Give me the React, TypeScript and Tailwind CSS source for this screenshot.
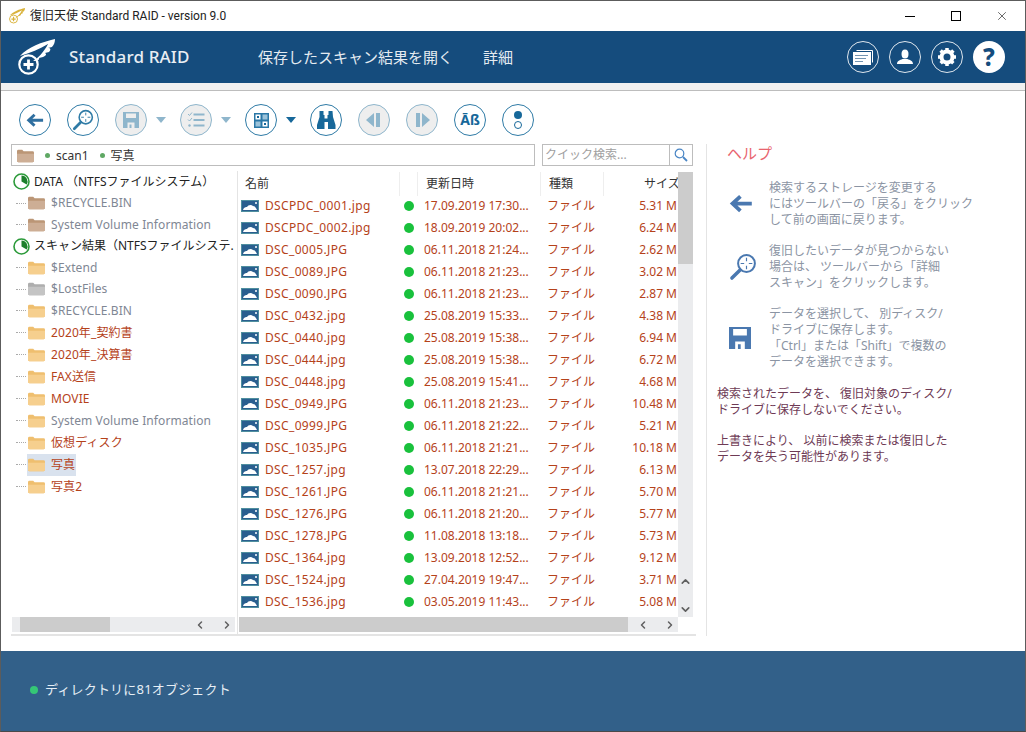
import { ChevronLeft, ChevronRight, ChevronUp, ChevronDown, X } from "lucide-react";

const font = "font-['Noto_Sans','Noto_Sans_CJK_JP',sans-serif]";

type FolderKind = "tan" | "orange" | "gray";

const treeRows: { label: string; kind: string; red?: boolean; selected?: boolean }[] = [
  { label: "DATA  （NTFSファイルシステム）", kind: "root" },
  { label: "$RECYCLE.BIN", kind: "tan" },
  { label: "System Volume Information", kind: "tan" },
  { label: "スキャン結果（NTFSファイルシステ.", kind: "root" },
  { label: "$Extend", kind: "orange" },
  { label: "$LostFiles", kind: "gray" },
  { label: "$RECYCLE.BIN", kind: "orange" },
  { label: "2020年_契約書", kind: "orange", red: true },
  { label: "2020年_決算書", kind: "orange", red: true },
  { label: "FAX送信", kind: "orange", red: true },
  { label: "MOVIE", kind: "orange", red: true },
  { label: "System Volume Information", kind: "orange" },
  { label: "仮想ディスク", kind: "orange", red: true },
  { label: "写真", kind: "orange", red: true, selected: true },
  { label: "写真2", kind: "orange", red: true },
];

const files = [
  ["DSCPDC_0001.jpg", "17.09.2019 17:30...", "5.31 M"],
  ["DSCPDC_0002.jpg", "18.09.2019 20:02...", "6.24 M"],
  ["DSC_0005.JPG", "06.11.2018 21:24...", "2.62 M"],
  ["DSC_0089.JPG", "06.11.2018 21:23...", "3.02 M"],
  ["DSC_0090.JPG", "06.11.2018 21:23...", "2.87 M"],
  ["DSC_0432.jpg", "25.08.2019 15:33...", "4.38 M"],
  ["DSC_0440.jpg", "25.08.2019 15:38...", "6.94 M"],
  ["DSC_0444.jpg", "25.08.2019 15:38...", "6.72 M"],
  ["DSC_0448.jpg", "25.08.2019 15:41...", "4.68 M"],
  ["DSC_0949.JPG", "06.11.2018 21:23...", "10.48 M"],
  ["DSC_0999.JPG", "06.11.2018 21:22...", "5.21 M"],
  ["DSC_1035.JPG", "06.11.2018 21:21...", "10.18 M"],
  ["DSC_1257.jpg", "13.07.2018 22:29...", "6.13 M"],
  ["DSC_1261.JPG", "06.11.2018 21:21...", "5.70 M"],
  ["DSC_1276.JPG", "06.11.2018 21:20...", "5.77 M"],
  ["DSC_1278.JPG", "11.08.2018 13:18...", "5.73 M"],
  ["DSC_1364.jpg", "13.09.2018 12:52...", "9.12 M"],
  ["DSC_1524.jpg", "27.04.2019 19:47...", "3.71 M"],
  ["DSC_1536.jpg", "03.05.2019 11:43...", "5.08 M"],
];

const Wing = ({ color, size }: { color: string; size: number }) => (
  <svg width={size} height={size} viewBox="0 0 37 37" fill="none">
    <circle cx="10.500" cy="25.500" r="9.200" stroke={color} strokeWidth="2.200" />
    <path d="M10.500 20.500v10M5.500 25.500h10" stroke={color} strokeWidth="2.800" />
    <path
      d="M2 17C10 8 24 3 37 0c0 3-1 6-3 8l-4 1c3 0 3 2 1 4l-4 1c2 1 1 3-2 4l-4 1c1 1-1 3-6 3 5-3 11-9 15-17C22 10 12 14 2 17z"
      fill={color}
    />
  </svg>
);

const Circle = ({ dim, children }: { dim?: boolean; children: React.ReactNode }) => (
  <div
    className={`w-8 h-8 rounded-full border flex items-center justify-center shrink-0 ${
      dim ? "border-[#8fb6cc] bg-[#eeeeee]" : "border-[#2f7ba6] bg-white"
    }`}
  >
    {children}
  </div>
);

const Caret = ({ dim }: { dim?: boolean }) => (
  <div
    className={`w-0 h-0 border-l-[5px] border-r-[5px] border-t-[6px] border-l-transparent border-r-transparent ${
      dim ? "border-t-[#8fb6cc]" : "border-t-[#17689a]"
    }`}
  />
);

const BackIcon = ({ color, w = 18 }: { color: string; w?: number }) => (
  <svg width={w} height={w * 0.8} viewBox="0 0 20 16" fill="none">
    <path d="M19 8H4M9.500 2 3 8l6.500 6" stroke={color} strokeWidth="3.200" />
  </svg>
);

const ScanIcon = ({ color, size = 22 }: { color: string; size?: number }) => (
  <svg width={size} height={size} viewBox="0 0 24 24" fill="none">
    <circle cx="15" cy="9" r="7.200" stroke={color} strokeWidth="1.700" />
    <path d="M15 4v3M15 11v3M10 9h3M17 9h3" stroke={color} strokeWidth="1" />
    <path d="M9.500 14.500 2.500 21.500" stroke={color} strokeWidth="3" strokeLinecap="round" />
  </svg>
);

const SaveIcon = ({ color, size = 16 }: { color: string; size?: number }) => (
  <svg width={size} height={size} viewBox="0 0 16 16">
    <path
      fillRule="evenodd"
      d="M0 0h16v16H0zM3 1.500v4.600h10V1.500zM4.500 10.500V16h7v-5.500zM6.500 12.500h2V16h-2z"
      fill={color}
    />
  </svg>
);

const ListIcon = () => (
  <svg width="18" height="18" viewBox="0 0 18 18" fill="none">
    <path d="M6.500 3.500h11M6.500 9h11M6.500 14.500h11" stroke="#8fb6cc" strokeWidth="1.800" />
    <path d="M1 3l1.500 1.500L5 1.500M1 8.500 2.500 10 5 7" stroke="#8fb6cc" strokeWidth="1" />
    <circle cx="2.500" cy="14.500" r="1.200" fill="#8fb6cc" />
  </svg>
);

const GridIcon = () => (
  <svg width="15" height="15" viewBox="0 0 15 15">
    <path fill="#2a77a6" d="M0 0h15v15H0z" />
    <path fill="#fff" d="M1.500 1.500h5v5h-5zM8.500 8.500h5v5h-5z" />
    <path fill="#17689a" d="M3 3h2v2H3zM10 10h2v2h-2z" />
    <path fill="#9cc3da" d="M8.500 1.500h5v5h-5zM1.500 8.500h5v5h-5z" />
  </svg>
);

const Binoculars = () => (
  <svg width="20" height="20" viewBox="0 0 20 20">
    <path
      fill="#17689a"
      d="M3.500 1h4v4h1v3.500h3V5h1V1h4l.5 6 2.500 8v4h-7.500v-7H8.500v7H1v-4l2.500-8z"
    />
  </svg>
);

const Tri = ({ flip }: { flip?: boolean }) => (
  <svg width="16" height="14" viewBox="0 0 16 14" className={flip ? "-scale-x-100" : ""}>
    <path fill="#8fb6cc" d="M0 7 8 0v14zM10 0h4v14h-4z" />
  </svg>
);

const CardsIcon = () => (
  <svg width="20" height="16" viewBox="0 0 20 16">
    <path fill="none" stroke="#fff" d="M3.500 1.500h16v12" />
    <path fill="#fff" d="M0 3h18v13H0z" />
    <path fill="#154c7d" d="M2 6h13v1H2zM2 9h11v1H2zM2 12h8v1H2z" opacity=".6" />
  </svg>
);

const Person = () => (
  <svg width="16" height="16" viewBox="0 0 16 16" fill="#fff">
    <ellipse cx="8" cy="5" rx="3.500" ry="4.500" />
    <path d="M0 15c0-3 3-4 5.500-5h5C13 11 16 12 16 15z" />
  </svg>
);

const Gear = () => (
  <svg width="20" height="20" viewBox="0 0 20 20">
    <circle cx="10" cy="10" r="5.500" fill="none" stroke="#fff" strokeWidth="4" />
    <path
      d="M10 1v18M1 10h18M3.600 3.600l12.800 12.800M16.400 3.600 3.600 16.400"
      stroke="#fff"
      strokeWidth="3.500"
      strokeDasharray="3.500 11"
      fill="none"
    />
  </svg>
);

const Folder = ({ kind }: { kind: FolderKind }) => {
  const c = {
    tan: ["#cdae95", "#bb9676"],
    orange: ["#f6cf8e", "#efbf6f"],
    gray: ["#c4c4c4", "#aeaeae"],
  }[kind];
  return (
    <svg width="17" height="14" viewBox="0 0 18 14" className="shrink-0">
      <path d="M0 2q0-1.500 1.500-1.500h4L7 2h9.500Q18 2 18 3.500V12q0 1.500-1.500 1.500h-15Q0 13.500 0 12z" fill={c[1]} />
      <path d="M0 4.500h18V12q0 1.500-1.500 1.500h-15Q0 13.500 0 12z" fill={c[0]} />
    </svg>
  );
};

const Pie = () => (
  <svg width="17" height="17" viewBox="0 0 17 17" className="shrink-0">
    <circle cx="8.500" cy="8.500" r="7.500" fill="#fff" stroke="#2c9a3a" strokeWidth="1.600" />
    <path d="M8.500 8.500V2.500A6 6 0 0 1 13.700 11.500z" fill="#1d7f2c" />
  </svg>
);

const Photo = () => (
  <svg width="18" height="12" viewBox="0 0 18 12" className="shrink-0">
    <path fill="#4f8f9f" d="M0 0h18v12H0z" />
    <path fill="#2a5f8f" d="M1 1h16v10H1z" />
    <path fill="#fff" d="M2 10c1-3 3-3 4-3 1-2 4-3 6-1 2 0 3 2 4 4z" />
    <circle cx="15" cy="3" r="1" fill="#fff" />
  </svg>
);

const ScrollArrow = ({ children }: { children: React.ReactNode }) => (
  <div className="w-[15px] h-[15px] flex items-center justify-center text-[#606060]">{children}</div>
);

const HelpItem = ({ icon, lines }: { icon: React.ReactNode; lines: string[] }) => (
  <div className="flex items-center">
    <div className="w-[52px] pl-[12px] shrink-0 flex items-center">{icon}</div>
    <div className="text-[12px] leading-[16px] text-[#8b94a3] whitespace-nowrap">
      {lines.map((l) => (
        <div key={l}>{l}</div>
      ))}
    </div>
  </div>
);

const ColHead = ({ w, label, pad }: { w: string; label: string; pad: string }) => (
  <div className={`${w} ${pad} h-[24px] mt-px border-r border-[#eeeeee] flex items-center shrink-0`}>{label}</div>
);

export default function App() {
  return (
    <div
      className={`${font} w-[1026px] h-[732px] bg-white border border-[#5c5c5c] border-b-[#4a4a4a] flex flex-col overflow-hidden text-[12px]`}
    >
      {/* title bar */}
      <div className="h-[30px] flex items-center shrink-0 pl-[8px]">
        <Wing color="#d9b23a" size={16} />
        <span className="ml-[5px] text-[12px] text-[#222] font-['Roboto','Noto_Sans_CJK_JP',sans-serif]">
          復旧天使 Standard RAID - version 9.0
        </span>
        <div className="ml-auto flex items-center h-full">
          <div className="w-[46px] flex justify-center">
            <div className="w-[10px] h-px bg-black" />
          </div>
          <div className="w-[46px] flex justify-center">
            <div className="w-[10px] h-[10px] border border-black" />
          </div>
          <div className="w-[46px] flex justify-center">
            <X size={14} strokeWidth={1} color="#000" />
          </div>
        </div>
      </div>

      {/* header */}
      <div className="h-[52px] bg-[#154c7d] flex items-center shrink-0 text-white">
        <div className="ml-[17px] w-[37px]">
          <Wing color="#fff" size={37} />
        </div>
        <span className="ml-[14px] text-[17px] font-medium tracking-[0.15px] text-[#e9eef3] w-[189px] whitespace-nowrap">
          Standard RAID
        </span>
        <span className="text-[15px] text-[#e4ebf1] whitespace-nowrap">保存したスキャン結果を開く</span>
        <span className="ml-[30px] text-[15px] text-[#e4ebf1]">詳細</span>
        <div className="ml-auto mr-[20px] flex gap-[10px]">
          <div className="w-8 h-8 rounded-full border border-[#dfe7ee] flex items-center justify-center">
            <CardsIcon />
          </div>
          <div className="w-8 h-8 rounded-full border border-[#dfe7ee] flex items-center justify-center">
            <Person />
          </div>
          <div className="w-8 h-8 rounded-full border border-[#dfe7ee] flex items-center justify-center">
            <Gear />
          </div>
          <div className="w-8 h-8 rounded-full bg-white flex items-center justify-center text-[#154c7d] text-[24px] font-extrabold leading-none">
            ?
          </div>
        </div>
      </div>
      <div className="h-[8px] bg-[#f0f0f0] border-b border-[#bdbdbd] shrink-0" />

      {/* toolbar */}
      <div className="h-[53px] pl-[18px] pt-[13px] flex items-start shrink-0">
        <Circle><BackIcon color="#2f6fa0" /></Circle>
        <div className="ml-[16px]"><Circle><ScanIcon color="#2f7ba6" /></Circle></div>
        <div className="ml-[16px]"><Circle dim><SaveIcon color="#8fb6cc" /></Circle></div>
        <div className="ml-[9px] mt-[13px]"><Caret dim /></div>
        <div className="ml-[14px]"><Circle dim><ListIcon /></Circle></div>
        <div className="ml-[9px] mt-[13px]"><Caret dim /></div>
        <div className="ml-[14px]"><Circle><GridIcon /></Circle></div>
        <div className="ml-[9px] mt-[13px]"><Caret /></div>
        <div className="ml-[14px]"><Circle><Binoculars /></Circle></div>
        <div className="ml-[16px]"><Circle dim><Tri /></Circle></div>
        <div className="ml-[16px]"><Circle dim><Tri flip /></Circle></div>
        <div className="ml-[16px]">
          <Circle><span className="text-[14px] font-bold text-[#17689a] leading-none">Āß</span></Circle>
        </div>
        <div className="ml-[16px]">
          <Circle>
            <div className="flex flex-col items-center gap-[2px]">
              <div className="w-[8px] h-[8px] rounded-full bg-[#17689a]" />
              <div className="w-[8px] h-[8px] rounded-full border border-[#17689a]" />
            </div>
          </Circle>
        </div>
      </div>

      {/* main */}
      <div className="flex flex-1 min-h-0 pl-[10px]">
        <div className="w-[685px] shrink-0 flex flex-col">
          {/* path + search */}
          <div className="flex h-[22px] shrink-0">
            <div className="w-[524px] border border-[#bdbdbd] flex items-center pl-[5px] pt-px text-[#333]">
              <Folder kind="tan" />
              <div className="ml-[11px] w-[5px] h-[5px] rounded-full bg-[#5fa864]" />
              <span className="ml-[6px]">scan1</span>
              <div className="ml-[11px] w-[5px] h-[5px] rounded-full bg-[#5fa864]" />
              <span className="ml-[6px]">写真</span>
            </div>
            <div className="ml-[7px] w-[128px] border border-[#bdbdbd] flex items-center pl-[2px] text-[#a0a0a0]">
              クイック検索...
            </div>
            <div className="w-[23px] border border-l-0 border-[#bdbdbd] flex items-center justify-center">
              <svg width="14" height="14" viewBox="0 0 14 14" fill="none">
                <circle cx="5.500" cy="5.500" r="4.300" stroke="#4a86c5" strokeWidth="1.200" />
                <path d="M9 9l4 4" stroke="#4a86c5" strokeWidth="1.800" />
              </svg>
            </div>
          </div>

          <div className="flex h-[463px] mt-[5px] shrink-0">
            {/* tree */}
            <div className="w-[227px] shrink-0 border-r border-[#e4e4e4] flex flex-col">
              <div className="overflow-hidden">
                {treeRows.map((r, i) => (
                  <div key={i} className={`${i < 7 ? "h-[21.5px]" : "h-[22px]"} flex items-center whitespace-nowrap`}>
                    {r.kind === "root" ? (
                      <div className="pl-[2px] flex items-center text-[#222]">
                        <Pie />
                        <span className="ml-[4px]">{r.label}</span>
                      </div>
                    ) : (
                      <div className="flex items-center pl-[5px]">
                        <div className="w-[10px] border-t border-dotted border-[#aaaaaa]" />
                        <div className={`ml-[1px] flex items-center h-[22px] px-[1px] ${r.selected ? "bg-[#d9e2ee]" : ""}`}>
                          <Folder kind={r.kind as FolderKind} />
                          <span className={`ml-[6px] tracking-[0.1px] ${r.red ? "text-[#b5421a]" : "text-[#7f8794]"}`}>
                            {r.label}
                          </span>
                        </div>
                      </div>
                    )}
                  </div>
                ))}
              </div>
              <div className="h-[15px] ml-[1px] mr-[2px] mt-auto mb-[2px] bg-[#ebecee] flex items-center shrink-0">
                <div className="ml-[8px] w-[90px] h-full bg-[#cccccc]" />
                <div className="ml-auto mr-[1px] flex">
                  <ScrollArrow><ChevronLeft size={12} strokeWidth={3} /></ScrollArrow>
                  <div className="w-[12px]" />
                  <ScrollArrow><ChevronRight size={12} strokeWidth={3} /></ScrollArrow>
                </div>
              </div>
            </div>

            {/* file list */}
            <div className="flex-1 min-w-0 flex flex-col pl-[1px]">
              <div className="flex flex-1 min-h-0">
                <div className="w-[439px] overflow-hidden">
                  <div className="flex text-[#333] whitespace-nowrap -mb-px">
                    <ColHead w="w-[161px]" pad="pl-[6px]" label="名前" />
                    <div className="w-[18px] mt-px border-r border-[#eeeeee] h-[24px]" />
                    <ColHead w="w-[123px]" pad="pl-[8px]" label="更新日時" />
                    <ColHead w="w-[63px]" pad="pl-[8px]" label="種類" />
                    <div className="w-[74px] h-[24px] mt-px flex items-center shrink-0 overflow-hidden pl-[40px]">
                      サイズ
                    </div>
                  </div>
                  <div className="text-[#b5421a] whitespace-nowrap">
                    {files.map(([n, d, s]) => (
                      <div key={n} className="h-[22px] flex items-center">
                        <div className="w-[161px] shrink-0 flex items-center pl-[2px]">
                          <Photo />
                          <span className="ml-[6px] tracking-[0.35px]">{n}</span>
                        </div>
                        <div className="w-[18px] shrink-0 flex justify-center">
                          <div className="w-[10px] h-[10px] rounded-full bg-[#19c13c]" />
                        </div>
                        <div className="w-[123px] shrink-0 pl-[6px]">{d}</div>
                        <div className="w-[63px] shrink-0 pl-[6px]">ファイル</div>
                        <div className="w-[73px] shrink-0 text-right">{s}</div>
                      </div>
                    ))}
                  </div>
                </div>
                <div className="w-[15px] mt-px bg-[#ebecee] flex flex-col items-center">
                  <div className="w-full h-[92px] bg-[#cccccc]" />
                  <div className="mt-auto pb-[1px] text-[#606060] flex flex-col">
                    <ChevronUp size={13} strokeWidth={3} />
                    <div className="h-[15px]" />
                    <ChevronDown size={13} strokeWidth={3} />
                  </div>
                </div>
              </div>
              <div className="h-[15px] mb-[2px] w-[439px] bg-[#ebecee] flex items-center shrink-0">
                <div className="w-[389px] h-full bg-[#cccccc]" />
                <div className="ml-auto mr-[1px] flex">
                  <ScrollArrow><ChevronLeft size={12} strokeWidth={3} /></ScrollArrow>
                  <div className="w-[12px]" />
                  <ScrollArrow><ChevronRight size={12} strokeWidth={3} /></ScrollArrow>
                </div>
              </div>
            </div>
          </div>
          <div className="border-t-2 border-[#e4e4e4] shrink-0" />
        </div>

        {/* help */}
        <div className="ml-[10px] h-[492px] border-l border-[#e4e4e4] pl-[10px] flex-1">
          <div className="text-[15px] leading-[20px] text-[#e8646e] ml-[10px] -mt-[1px]">ヘルプ</div>
          <div className="mt-[17px] flex flex-col gap-[15px]">
            <HelpItem
              icon={<BackIcon color="#4a78b0" w={24} />}
              lines={["検索するストレージを変更する", "にはツールバーの「戻る」をクリック", "して前の画面に戻ります。"]}
            />
            <HelpItem
              icon={<ScanIcon color="#4a78b0" size={28} />}
              lines={["復旧したいデータが見つからない", "場合は、 ツールバーから「詳細", "スキャン」をクリックします。"]}
            />
            <HelpItem
              icon={<SaveIcon color="#4a78b0" size={22} />}
              lines={["データを選択して、 別ディスク/", "ドライブに保存します。", "「Ctrl」または「Shift」で複数の", "データを選択できます。"]}
            />
          </div>
          <div className="mt-[16px] text-[#6e3a55] leading-[16px] whitespace-nowrap">
            <div>検索されたデータを、 復旧対象のディスク/</div>
            <div>ドライブに保存しないでください。</div>
            <div className="mt-[15px]">上書きにより、 以前に検索または復旧した</div>
            <div>データを失う可能性があります。</div>
          </div>
        </div>
      </div>

      {/* footer */}
      <div className="h-[80px] bg-[#326089] mt-auto flex items-center pl-[29px] pb-[2px] text-[#e6eef5] shrink-0">
        <div className="w-[8px] h-[8px] rounded-full bg-[#35c776]" />
        <span className="ml-[7px] text-[13px] tracking-[0.2px]">ディレクトリに81オブジェクト</span>
      </div>
    </div>
  );
}
